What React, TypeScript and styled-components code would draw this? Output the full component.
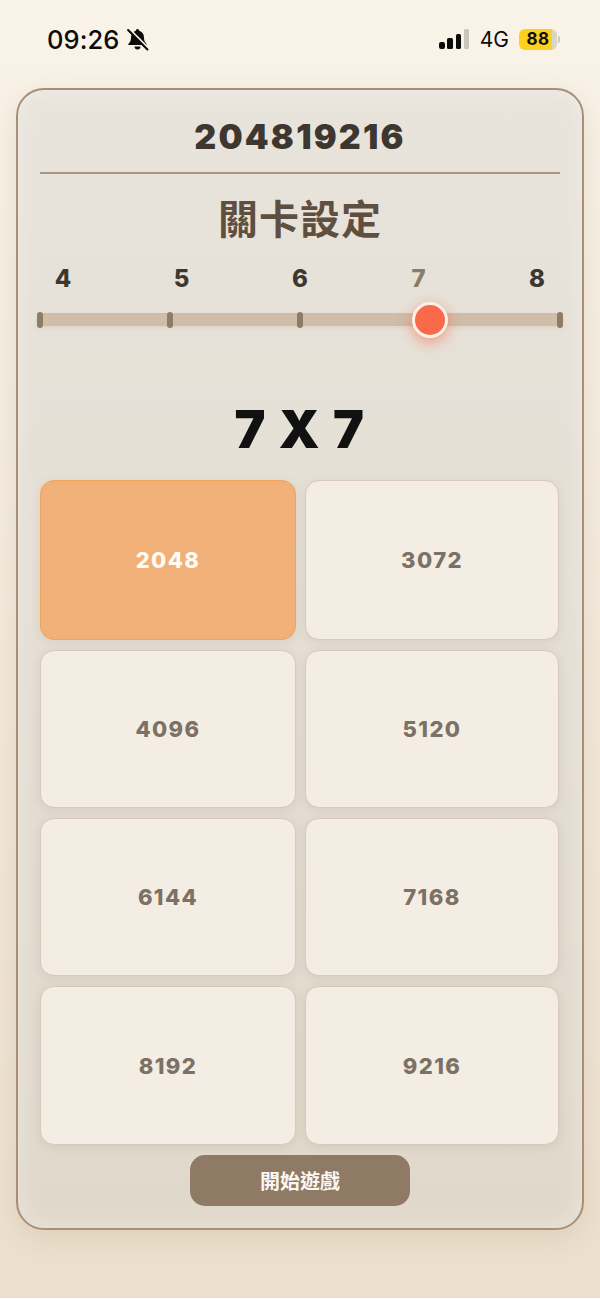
import React from 'react'
import styled, { createGlobalStyle } from 'styled-components'

const GlobalStyle = createGlobalStyle`
  html, body {
    margin: 0;
    padding: 0;
    background: #fff;
  }
  * {
    box-sizing: border-box;
  }
`

const Page = styled.div`
  width: 600px;
  height: 1298px;
  padding: 0 16px;
  overflow: hidden;
  background: linear-gradient(180deg, #f9f3e8 0%, #f5eee1 30%, #f0e6d7 70%, #ecdfcc 100%);
  font-family: Inter, 'Liberation Sans', 'Noto Sans CJK TC', sans-serif;
`

const StatusBar = styled.div`
  height: 88px;
  padding: 0 24px 10px 31px;
  display: flex;
  align-items: center;
  justify-content: space-between;
  color: #0c0c0c;
`

const StatusGroup = styled.div`
  display: flex;
  align-items: center;
`

const Clock = styled.span`
  font-size: 25.5px;
  font-weight: 500;
  letter-spacing: 0.1px;
`

const BellIcon = styled.svg`
  width: 23px;
  height: 23px;
  margin-left: 6px;
`

const SignalIcon = styled.svg`
  width: 31px;
  height: 20px;
  margin-right: 10px;
`

const Network = styled.span`
  font-size: 21px;
  font-weight: 400;
  margin-right: 10px;
`

const Battery = styled.div`
  width: 38px;
  height: 21px;
  border-radius: 6px;
  background: linear-gradient(90deg, #fdcf1e 0%, #fdcf1e 86%, #d9d5c8 86%);
  font-size: 17px;
  font-weight: 700;
  letter-spacing: 0.4px;
  display: flex;
  align-items: center;
  justify-content: center;
  color: #111;
`

const BatteryCap = styled.div`
  width: 2px;
  height: 7px;
  margin-left: 1px;
  border-radius: 0 2px 2px 0;
  background: #cfcabd;
`

const Card = styled.div`
  height: 1142px;
  padding: 27px 22px 22px;
  border: 2px solid #a98f78;
  border-radius: 28px;
  background: linear-gradient(180deg, #e8e4dc 0%, #e4ded3 50%, #e0d8ca 100%);
  box-shadow: inset 0 0 24px rgba(255, 255, 255, 0.35), 0 8px 28px rgba(160, 130, 100, 0.18);
  display: flex;
  flex-direction: column;
`

const Score = styled.div`
  padding-bottom: 15px;
  border-bottom: 2px solid #ab9580;
  text-align: center;
  font-size: 34px;
  line-height: 40px;
  font-weight: 900;
  letter-spacing: 2.2px;
  color: #3d3730;
`

const Heading = styled.h1`
  margin: 21px 0 0;
  text-align: center;
  font-size: 40px;
  line-height: 50px;
  font-weight: 700;
  letter-spacing: 1px;
  color: #5f4f40;
`

const Labels = styled.div`
  margin-top: 20px;
  padding: 0 13px;
  display: flex;
  justify-content: space-between;
`

const Label = styled.span<{ $active?: boolean }>`
  width: 20px;
  text-align: center;
  font-size: 24px;
  line-height: 28px;
  font-weight: 800;
  color: ${props => (props.$active ? '#8f7a66' : '#3d3730')};
`

const Track = styled.div`
  position: relative;
  height: 13px;
  margin: 20px -3px 0;
  background: #cfbda7;
  display: flex;
  align-items: center;
  justify-content: space-between;
  box-shadow: 0 2px 4px rgba(150, 125, 100, 0.12);
`

const Tick = styled.span`
  width: 6px;
  height: 16px;
  border-radius: 3px;
  background: #8f7b66;
`

const Thumb = styled.span`
  position: absolute;
  left: 375px;
  top: -11px;
  width: 36px;
  height: 36px;
  border-radius: 50%;
  border: 3px solid #fdf0e6;
  background: #f96a4b;
  box-shadow: 0 4px 14px rgba(249, 90, 60, 0.55);
`

const BoardSize = styled.div`
  margin-top: 72px;
  text-align: center;
  font-size: 52px;
  line-height: 64px;
  font-weight: 900;
  letter-spacing: 1.5px;
  color: #111;
`

const TileGrid = styled.div`
  margin-top: 18px;
  display: grid;
  grid-template-columns: 256px 254px;
  grid-template-rows: 160px 158px 158px 159px;
  gap: 10px 9px;
`

const Tile = styled.div<{ $selected?: boolean }>`
  border-radius: 14px;
  border: 1px solid ${props => (props.$selected ? '#eda561' : '#d8c9ba')};
  background: ${props => (props.$selected ? '#f1b077' : '#f4ede3')};
  color: ${props => (props.$selected ? '#fffaf3' : '#7b7166')};
  box-shadow: 0 2px 8px rgba(120, 100, 80, 0.12);
  display: flex;
  align-items: center;
  justify-content: center;
  font-size: 22px;
  font-weight: 800;
  letter-spacing: 1.4px;
`

const StartButton = styled.button`
  align-self: center;
  width: 220px;
  height: 51px;
  margin-top: 10px;
  border: none;
  border-radius: 15px;
  background: #8f7a66;
  color: #fbf7f1;
  font-family: inherit;
  font-size: 20px;
  font-weight: 700;
`

const sizes = [4, 5, 6, 7, 8]
const targets = [2048, 3072, 4096, 5120, 6144, 7168, 8192, 9216]

const App: React.FC = () => {
  return (
    <Page>
      <GlobalStyle />
      <StatusBar>
        <StatusGroup>
          <Clock>09:26</Clock>
          <BellIcon viewBox="0 0 22 22">
            <path
              d="M11 1a1.6 1.6 0 0 1 1.6 1.7c3 .8 4.6 3.200 4.600 6.300 0 2.800.8 4.500 2.400 6 .5.6.1 1.300-.6 1.300H3c-.7 0-1.100-.7-.6-1.300 1.600-1.500 2.400-3.200 2.400-6 0-3.100 1.600-5.500 4.600-6.300A1.600 1.600 0 0 1 11 1z"
              fill="#0c0c0c"
            />
            <path d="M8.200 17.800h5.600a2.800 2.800 0 0 1-5.600 0z" fill="#0c0c0c" />
            <path d="M3.400 1.300 21.400 19.300" stroke="#f8f2e6" strokeWidth="2" />
            <path d="M2 2 20.500 20.500" stroke="#0c0c0c" strokeWidth="2" strokeLinecap="round" />
          </BellIcon>
        </StatusGroup>
        <StatusGroup>
          <SignalIcon viewBox="0 0 31 20">
            <rect x="0" y="13" width="6" height="7" rx="2" fill="#0c0c0c" />
            <rect x="8" y="9" width="6" height="11" rx="1.500" fill="#0c0c0c" />
            <rect x="17" y="5" width="5" height="15" rx="1.500" fill="#0c0c0c" />
            <rect x="25" y="0" width="5" height="20" rx="1.500" fill="#c9c5bb" />
          </SignalIcon>
          <Network>4G</Network>
          <Battery>88</Battery>
          <BatteryCap />
        </StatusGroup>
      </StatusBar>
      <Card>
        <Score>204819216</Score>
        <Heading>關卡設定</Heading>
        <Labels>
          {sizes.map(size => (
            <Label key={size} $active={size === 7}>
              {size}
            </Label>
          ))}
        </Labels>
        <Track>
          {sizes.map(size => (
            <Tick key={size} />
          ))}
          <Thumb />
        </Track>
        <BoardSize>7 X 7</BoardSize>
        <TileGrid>
          {targets.map(target => (
            <Tile key={target} $selected={target === 2048}>
              {target}
            </Tile>
          ))}
        </TileGrid>
        <StartButton>開始遊戲</StartButton>
      </Card>
    </Page>
  )
}

export default App
